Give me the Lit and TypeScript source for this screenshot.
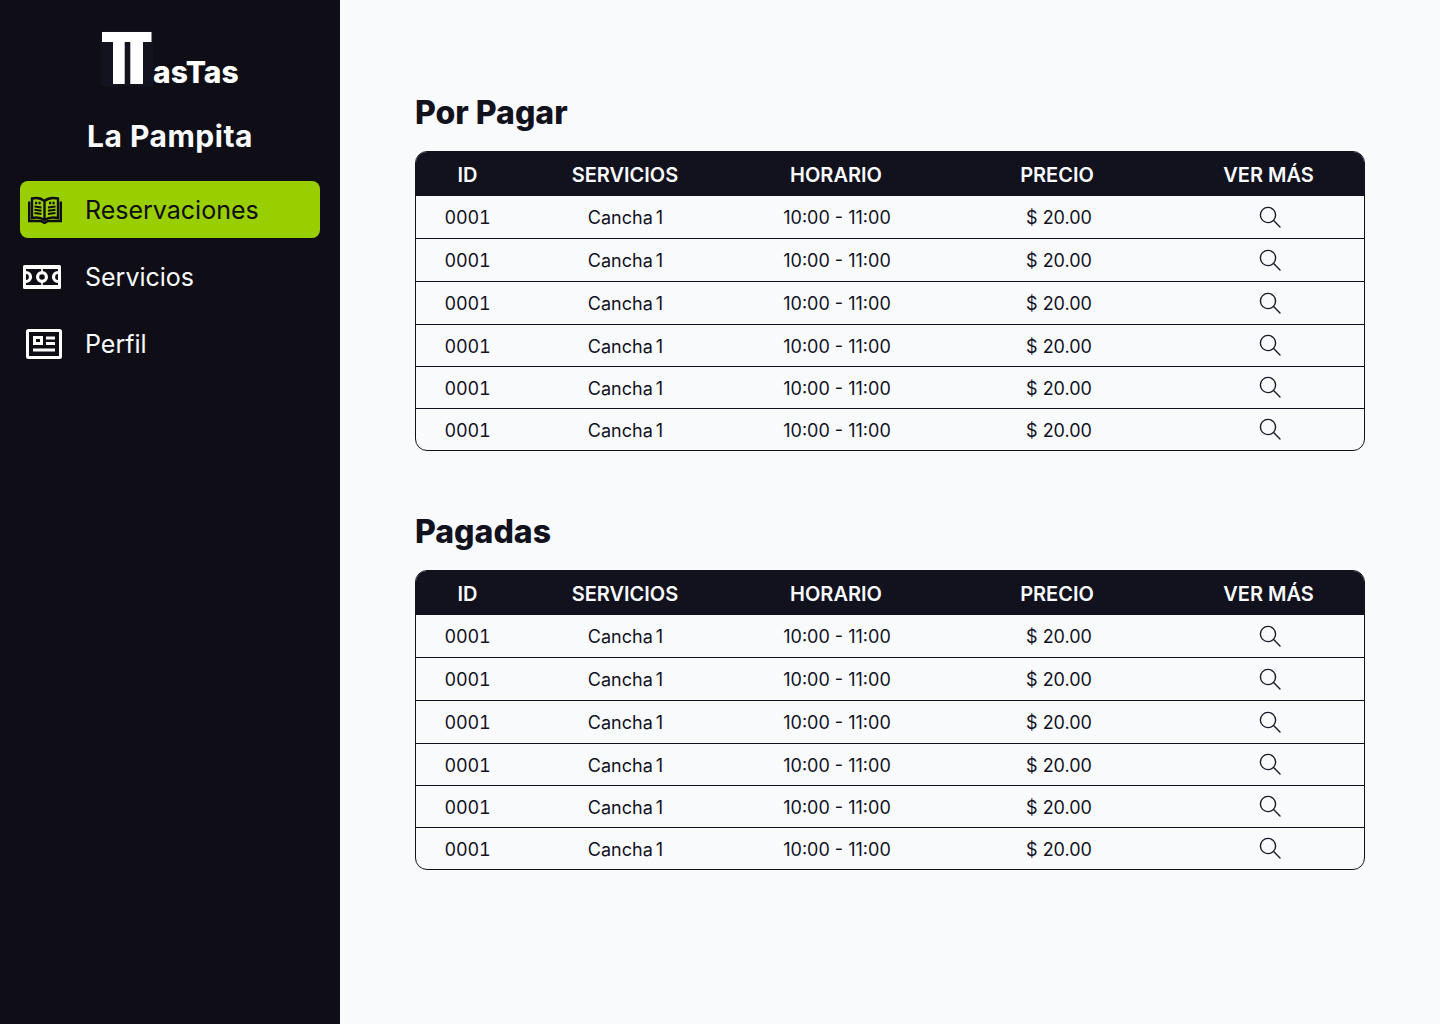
import { LitElement, html, css, svg } from "lit";
import { customElement } from "lit/decorators.js";

const search = html`<svg class="search" viewBox="0 0 22 22" width="22" height="22" fill="none" stroke="#1a1a26" stroke-width="1.4"><circle cx="9" cy="9" r="7.6"/><path d="M14.6 14.500 L21 20.900" stroke-linecap="round"/></svg>`;

const book = html`<svg viewBox="0 0 34 28" width="34" height="28" fill="none" stroke="#0f0e17">
  <path d="M16.500 5 C13 2 8 1.500 4 2.500 V22 C8 21 13 21.500 16.500 24 C20 21.500 25 21 30 22 V2.500 C25 1.500 20 2 16.500 5 Z M16.500 5 V24" stroke-width="2.400"/>
  <path d="M1.200 5.500 V25 H13 L16.500 27 L20 25 H32.800 V5.500" stroke-width="2.400"/>
  <path d="M7 7h2.200M10.500 7h2.200M21 7h2.200M24.500 7h2.200" stroke-width="2.400"/>
  <path d="M6.500 10.500 L13.500 11.500 M6.500 13.800 L13.500 14.800 M6.500 17 L13.500 18 M20 11.500 L27.500 10.500 M20 14.800 L27.500 13.800 M20 18 L27.500 17" stroke-width="2"/>
</svg>`;

const court = html`<svg viewBox="0 0 38 24" width="38" height="24">
  <rect width="38" height="24" rx="1.500" fill="#fff"/>
  <rect x="3" y="4" width="32" height="16" fill="#0f0e17"/>
  <g fill="none" stroke="#fff" stroke-width="3.200">
    <circle cx="19" cy="12" r="4.400"/>
    <path d="M3 7.500 A4.500 4.500 0 0 1 3 16.500 M35 7.500 A4.500 4.500 0 0 0 35 16.500"/>
  </g>
  <path d="M19 4 V7.500 M19 16.500 V20" stroke="#fff" stroke-width="1.600"/>
</svg>`;

const news = html`<svg viewBox="0 0 36 30" width="36" height="30">
  <rect x="1.500" y="1.500" width="33" height="27" rx="1" fill="none" stroke="#fff" stroke-width="3"/>
  <path d="M7 7 H17 V16 H7 Z M10 10 V13 H14 V10 Z" fill="#fff" fill-rule="evenodd"/>
  <path d="M20 7.500 H29 V10.500 H20 Z M20 13 H29 V16 H20 Z M7 19.500 H29 V22.500 H7 Z" fill="#fff"/>
</svg>`;

const logo = svg`<svg class="mark" viewBox="0 0 52 55" width="52" height="55">
  <rect width="52" height="55" fill="#13131f"/>
  <path d="M1 1 H50.500 V11 H42 V53 H29.300 V11 H23.700 V53 H12 V11 H1 Z" fill="#fff"/>
</svg>`;

@customElement("app-root")
export class AppRoot extends LitElement {
  static styles = css`
    :host { display: flex; min-height: 100vh; background: #f9fafc; color: #12121f;
      font-family: Inter, "Noto Sans", sans-serif; }
    .side { width: 340px; flex: none; background: #0f0e17; color: #fafafa; padding: 30px 20px 0; box-sizing: border-box; }
    .brand { display: flex; align-items: flex-end; height: 56px; padding-left: 81px; }
    .mark { display: block; }
    .brand-text { font-weight: 800; font-size: 30px; line-height: 1; margin-bottom: -1px; color: #fff; }
    .venue { margin: 29px 0 24px; height: 42px; line-height: 42px; text-align: center; font-size: 30px; font-weight: 700; letter-spacing: 0.5px; color: #f9fafc; }
    nav { display: flex; flex-direction: column; gap: 10px; }
    .item { height: 57px; display: flex; align-items: center; border-radius: 8px; font-size: 25px; color: #f9fafc; position: relative; padding-left: 65px; }
    .item.active { background: #99cf00; color: #0f0e17; }
    .ico { position: absolute; display: flex; }
    .i1 { left: 8px; top: 15px; }
    .i2 { left: 3px; top: 17px; }
    .i3 { left: 6px; top: 14px; }
    main { flex: 1; padding: 90px 75px 0; min-width: 0; }
    h2 { margin: 0 0 16px; font-size: 32px; line-height: 45px; font-weight: 800; color: #12121f; }
    section + section { margin-top: 58px; }
    .table { border: 1px solid #12121f; border-radius: 12px; overflow: hidden; }
    .row { display: grid; grid-template-columns: 103px 212px 210px 232px 191px; align-items: center; justify-items: center; box-sizing: border-box; height: 42px; border-bottom: 1px solid #12121f; font-size: 18px; }
    .row span { padding-top: 1px; }
    .row.head { background: #12121f; color: #f9fafc; height: 44px; border-bottom: 0; font-size: 20px; font-weight: 600; }
    .row:nth-child(-n+4):not(.head) { height: 43px; }
    .row:last-child { height: 41px; border-bottom: 0; }
    .id { font-feature-settings: "tnum"; letter-spacing: -0.2px; }
    .svc { word-spacing: -2px; padding-left: 1px; }
    .price { padding-left: 4px; }
    .time { padding-left: 2px; }
    .search { display: block; margin-left: 2px; }
    .row:nth-child(n+5) .search { margin-top: -1px; }
  `;

  private table() {
    const rows = Array.from({ length: 6 });
    return html`<div class="table">
      <div class="row head"><span>ID</span><span>SERVICIOS</span><span>HORARIO</span><span>PRECIO</span><span>VER MÁS</span></div>
      ${rows.map(() => html`<div class="row"><span class="id">0001</span><span class="svc">Cancha 1</span><span class="time">10:00 - 11:00</span><span class="price">$ 20.00</span>${search}</div>`)}
    </div>`;
  }

  render() {
    return html`
      <aside class="side">
        <div class="brand">${logo}<span class="brand-text">asTas</span></div>
        <div class="venue">La Pampita</div>
        <nav>
          <div class="item active"><span class="ico i1">${book}</span>Reservaciones</div>
          <div class="item"><span class="ico i2">${court}</span>Servicios</div>
          <div class="item"><span class="ico i3">${news}</span>Perfil</div>
        </nav>
      </aside>
      <main>
        <section><h2>Por Pagar</h2>${this.table()}</section>
        <section><h2>Pagadas</h2>${this.table()}</section>
      </main>`;
  }
}
